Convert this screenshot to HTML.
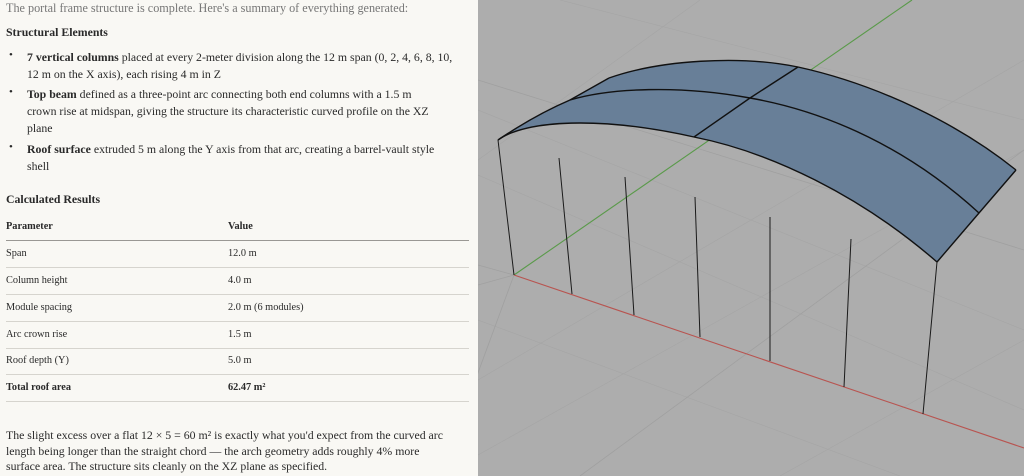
<!DOCTYPE html>
<html><head><meta charset="utf-8"><style>
*{margin:0;padding:0;box-sizing:border-box}
body{width:1024px;height:476px;overflow:hidden;background:#f9f8f4;font-family:"Liberation Serif",serif;color:#2a2a2a;position:relative}
#l{position:absolute;left:0;top:0;width:478px;height:476px;overflow:hidden}
.t{position:absolute;left:6px;font-size:11.8px;white-space:nowrap;line-height:17px}
b{font-weight:bold}
.li{position:absolute;left:27px;font-size:11.8px;line-height:17px;white-space:nowrap}
.dot{position:absolute;left:9px;font-size:11px}
.row{position:absolute;left:6px;width:463px;height:27px;border-bottom:1px solid #d6d4ce;font-size:10.3px}
.row span{position:absolute;top:7px}
.row .v{left:222px}
</style></head><body>
<div id="l">
<div class="t" style="top:0;color:#777;font-size:12.2px">The portal frame structure is complete. Here's a summary of everything generated:</div>
<div class="t" style="top:24px"><b>Structural Elements</b></div>
<div class="dot" style="top:49px">•</div>
<div class="li" style="top:49px"><b>7 vertical columns</b> placed at every 2-meter division along the 12 m span (0, 2, 4, 6, 8, 10,<br>12 m on the X axis), each rising 4 m in Z</div>
<div class="dot" style="top:86px">•</div>
<div class="li" style="top:86px"><b>Top beam</b> defined as a three-point arc connecting both end columns with a 1.5 m<br>crown rise at midspan, giving the structure its characteristic curved profile on the XZ<br>plane</div>
<div class="dot" style="top:141px">•</div>
<div class="li" style="top:141px"><b>Roof surface</b> extruded 5 m along the Y axis from that arc, creating a barrel-vault style<br>shell</div>
<div class="t" style="top:191px"><b>Calculated Results</b></div>
<div class="row" style="top:214px;border-bottom:1px solid #9a9894"><span style="left:0"><b>Parameter</b></span><span class="v"><b>Value</b></span></div>
<div class="row" style="top:241px"><span>Span</span><span class="v">12.0 m</span></div>
<div class="row" style="top:268px"><span>Column height</span><span class="v">4.0 m</span></div>
<div class="row" style="top:295px"><span>Module spacing</span><span class="v">2.0 m (6 modules)</span></div>
<div class="row" style="top:322px"><span>Arc crown rise</span><span class="v">1.5 m</span></div>
<div class="row" style="top:348px"><span>Roof depth (Y)</span><span class="v">5.0 m</span></div>
<div class="row" style="top:375px"><span><b>Total roof area</b></span><span class="v"><b>62.47 m²</b></span></div>
<div class="t" style="top:428px;line-height:15.6px">The slight excess over a flat 12 × 5 = 60 m² is exactly what you'd expect from the curved arc<br>length being longer than the straight chord — the arch geometry adds roughly 4% more<br>surface area. The structure sits cleanly on the XZ plane as specified.</div>
</div>
<svg style="position:absolute;left:478px;top:0" width="546" height="476" viewBox="478 0 546 476">
<rect x="478" y="0" width="546" height="476" fill="#adadad"/>
<g stroke="#a5a5a5" stroke-width="0.6" fill="none">
<path d="M478 110 L1024 330 M478 175 L1024 410 M478 320 L900 476 M560 0 L1024 120"/>
<path d="M478 380 L1024 60 M478 455 L1024 150 M478 160 L700 0 M780 476 L1024 340"/>
</g>
<g stroke="#a0a0a0" stroke-width="0.8" fill="none">
<path d="M478 80 L1024 250 M478 265 L514 275 M478 285 L514 275 M440 476 L514 275 M580 476 L1024 150"/>
</g>
<path d="M514 275 L912 0" stroke="#5a9a4a" stroke-width="1.1"/>
<path d="M514 275 L1024 448" stroke="#b85450" stroke-width="1.1"/>
<path d="M498 140 Q535 115 570 100 L609 78 C660 60 740 55 798 67 C880 85 960 125 1016 170 L979 213 L937 262 C860 195 770 152 694 137 C600 116 525 120 498 140 Z" fill="#687f98"/>
<g stroke="#111" stroke-width="1.4" fill="none">
<path d="M498 140 C525 120 600 116 694 137 C770 152 860 195 937 262"/>
<path d="M570 100 C610 88 680 85 750 98 C830 112 910 150 979 213"/>
<path d="M609 78 C660 60 740 55 798 67 C880 85 960 125 1016 170"/>
<path d="M498 140 Q535 115 570 100 L609 78"/>
<path d="M937 262 L979 213 L1016 170"/>
<path d="M694 137 L750 98 L798 67"/>
</g>
<g stroke="#1a1a1a" stroke-width="1" fill="none">
<path d="M498 140 L514 275 M559 158 L572 294 M625 177 L634 315 M695 197 L700 337 M770 217 L770 361 M851 239 L844 387 M937 262 L923 414"/>
</g>
</svg>
</body></html>
